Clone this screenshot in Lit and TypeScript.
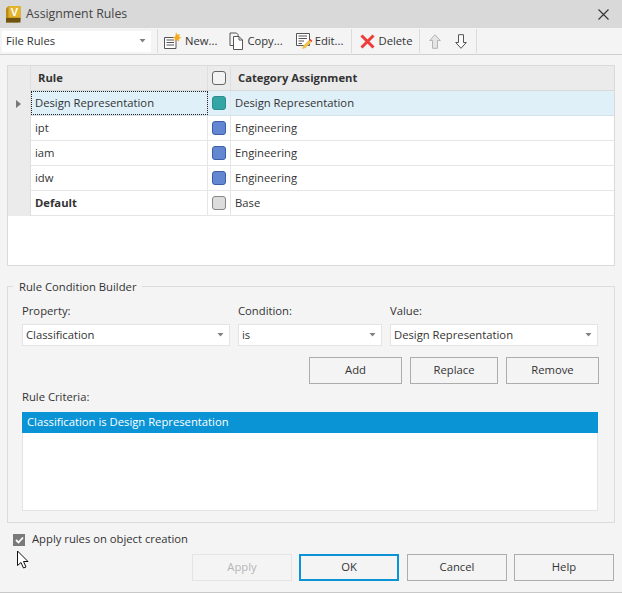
import { LitElement, html, css } from "lit";
import { customElement } from "lit/decorators.js";

const caret = html`<svg class="caret" width="7" height="4" viewBox="0 0 7 4"><path d="M.5 0H6.500L3.500 3.500Z" fill="#808080"/></svg>`;

const rows = [
  { n: "Design Representation", c: "Design Representation", col: "teal", sel: true },
  { n: "ipt", c: "Engineering", col: "blue" },
  { n: "iam", c: "Engineering", col: "blue" },
  { n: "idw", c: "Engineering", col: "blue" },
  { n: "Default", c: "Base", col: "grey", bold: true },
];

@customElement("app-root")
export class AppRoot extends LitElement {
  static styles = css`
    :host { display: block; width: 622px; height: 593px; font-family: "Open Sans", "Noto Sans", sans-serif; font-size: 11.25px; color: #333; }
    * { box-sizing: border-box; }
    .win { position: relative; width: 622px; height: 593px; background: #f4f4f4; border-bottom: 1px solid #c8c8c8; display: flex; flex-direction: column; overflow: hidden; }
    .title { height: 28px; background: #d9d9d9; display: flex; align-items: center; padding: 0 0 2px 6px; gap: 5px; font-size: 12.3px; color: #444; flex: none; }
    .title .t { flex: 1; }
    .title .x { margin-right: 13px; display: block; margin-top: 2px; }
    .title .logo { margin-top: 2px; }
    .tb { height: 27px; flex: none; border-bottom: 1px solid #d0d0d0; display: flex; align-items: center; background: #f4f4f4; }
    .combo { background: #fff; display: flex; align-items: center; justify-content: space-between; }
    .tb .combo { width: 149px; height: 21px; margin-left: 2px; padding: 0 5px 2px 4px; }
    .caret { display: block; flex: none; margin-top: 2px; }
    .sep { width: 1px; height: 24px; background: #dcdcdc; flex: none; }
    .tool { display: flex; align-items: center; flex: none; height: 24px; color: #333; white-space: nowrap; }
    .tool svg { display: block; flex: none; }
    .tool span { padding-bottom: 2px; }
    .ml5 { margin-left: 5px; } .ml6 { margin-left: 6px; } .ml7 { margin-left: 7px; } .ml8 { margin-left: 8px; }
    .ml9 { margin-left: 9px; } .ml11 { margin-left: 11px; } .ml12 { margin-left: 12px; } .ml13 { margin-left: 13px; } .ml14 { margin-left: 14px; }
    .g2 { gap: 2px; } .g3 { gap: 3px; }
    .table { margin: 10px 7px 0 7px; height: 201px; background: #fff; border: 1px solid #dadada; flex: none; display: flex; flex-direction: column; }
    .row { display: grid; grid-template-columns: 23px 177px 23px 1fr; height: 25px; border-bottom: 1px solid #e6e6e6; align-items: stretch; }
    .row.head { background: #ebebeb; border-bottom: 1px solid #d8d8d8; font-weight: 700; }
    .row.sel { background: #e0f0f9; border-bottom-color: #d6e2ea; }
    .cell { display: flex; align-items: center; padding: 0 0 2px 4px; border-right: 1px solid #e6e6e6; min-width: 0; white-space: nowrap; }
    .cell:last-child { border-right: none; }
    .row.head .cell { border-right-color: #dedede; }
    .row.head .name { padding-left: 7px; }
    .row.head .cat { padding-left: 7px; }
    .rh { background: #ebebeb; padding: 0 0 0 8px; border-right: 1px solid #dedede; margin-bottom: -1px; }
    .focus { outline: 1px dotted #222; outline-offset: -1px; }
    .cell.sw { padding: 0 0 0 4px; }
    .swatch { width: 14px; height: 14px; border-radius: 3px; border: 1px solid; }
    .teal { background: #34a5a5; border-color: #2a8c8c; }
    .blue { background: #6487d2; border-color: #3b5ea8; }
    .grey { background: #dcdcdc; border-color: #858585; }
    .hcheck { width: 14px; height: 14px; border-radius: 3px; border: 1px solid #666; background: #f3f3f3; }
    .b { font-weight: 700; }
    .group { position: relative; margin: 20px 7px 0 7px; height: 237px; border: 1px solid #dcdcdc; flex: none; padding: 16px 14px 0 14px; display: flex; flex-direction: column; }
    .legend { position: absolute; left: 5px; top: -8px; padding: 0 6px; background: #f4f4f4; line-height: 15px; }
    .fields { display: grid; grid-template-columns: 208px 144px 208px; column-gap: 8px; }
    .field { display: flex; flex-direction: column; gap: 6px; }
    .label { line-height: 15px; }
    .field .combo { height: 22px; padding: 0 5px 2px 3px; border: 1px solid #e4e4e4; }
    .btns { display: flex; justify-content: flex-end; gap: 8px; margin: 11px 1px 0 0; }
    .btn { height: 27px; width: 100px; padding-bottom: 2px; background: #f4f4f4; border: 1px solid #adadad; display: flex; align-items: center; justify-content: center; color: #333; flex: none; }
    .btn.w93 { width: 93px; } .btn.w88 { width: 88px; }
    .crit { margin-top: 5px; line-height: 15px; }
    .list { margin-top: 8px; height: 99px; background: #fff; border: 1px solid #e4e4e4; border-top: none; width: 576px; }
    .list .item { height: 21px; margin: 0 -1px; background: #0a94d6; color: #fff; display: flex; align-items: center; padding: 0 0 2px 5px; }
    .chk { display: flex; align-items: center; gap: 7px; margin: 9px 0 0 13px; height: 15px; flex: none; color: #333; }
    .chk span { padding-bottom: 2px; }
    .box { width: 12px; height: 12px; background: #7a7a7a; display: flex; align-items: center; justify-content: center; }
    .foot { display: flex; margin: 7px 0 0 192px; flex: none; }
    .dis { color: #b5b5b5; border-color: #e4e4e4; }
    .def { border: 2px solid #0a94d6; }
    .cursor { position: absolute; left: 16px; top: 550px; display: block; }
  `;

  render() {
    return html`<div class="win">
      <div class="title">
        <svg class="logo" width="15" height="17" viewBox="0 0 15 17">
          <path d="M0 2.500 2.500 0H14.500V14L12 16.500H0Z" fill="#b98a1c"/><path d="M2.500 0H14.500V11.500H2.500Z" fill="#e3b32c"/><path d="M0 12H14.500V16.500H0Z" fill="#6e5312"/>
          <text x="8.500" y="10" font-size="11" font-weight="700" fill="#fff" text-anchor="middle" font-family="Liberation Sans">V</text>
        </svg>
        <span class="t">Assignment Rules</span>
        <svg class="x" width="11" height="11" viewBox="0 0 11 11"><path d="M.5.500 10.500 10.500M10.500.500.500 10.500" stroke="#333" stroke-width="1.100" fill="none"/></svg>
      </div>
      <div class="tb">
        <div class="combo"><span>File Rules</span>${caret}</div>
        <div class="sep ml6"></div>
        <div class="tool ml5 g3">
          <svg width="19" height="18" viewBox="0 0 19 18"><path d="M1.500 5.500H13V16.500H1.500Z" fill="#fff" stroke="#555"/><path d="M3.500 8H11M3.500 10.500H11M3.500 13H11" stroke="#555"/><path d="M13 0l1.200 2.800L17 2l-1 2.600L18.500 6l-2.700.800.200 2.700-2.300-1.600-2.200 1.400.500-2.600L9.500 5.500l2.800-.700Z" fill="#f5a81c"/></svg>
          <span>New...</span>
        </div>
        <div class="tool ml12 g3">
          <svg width="15" height="18" viewBox="0 0 15 18"><path d="M4.500 13.500H1V1H7.500L9 2.500V4" fill="none" stroke="#555"/><path d="M4.500 4.500H10L13.500 8V17.500H4.500Z" fill="#fff" stroke="#555"/><path d="M10 4.500V8H13.500" fill="none" stroke="#555"/></svg>
          <span>Copy...</span>
        </div>
        <div class="tool ml13 g2">
          <svg width="17" height="18" viewBox="0 0 17 18"><path d="M.500 1.500H13.500V13.500H.500Z" fill="#fff" stroke="#555"/><path d="M2.500 4H11M2.500 6.500H11M2.500 9H8M2.500 11.500H6" stroke="#555"/><path d="M6 17l1-3 6-6 2.500 2-6 6Z" fill="#f0c24a"/><path d="M13 8l1.200-1.200 2.300 2.200L15.500 10Z" fill="#e8413c"/></svg>
          <span>Edit...</span>
        </div>
        <div class="sep ml8"></div>
        <div class="tool ml8 g3">
          <svg width="15" height="15" viewBox="0 0 15 15"><path d="M1.500 1.500 13.500 13.500M13.500 1.500 1.500 13.500" stroke="#ef3b3b" stroke-width="3"/></svg>
          <span>Delete</span>
        </div>
        <div class="sep ml7"></div>
        <div class="tool ml9">
          <svg width="12" height="15" viewBox="0 0 12 15"><path d="M6 .700 11.300 6.500H8.500V14.300H3.500V6.500H.700Z" fill="#e4e4e4" stroke="#b4b4b4"/></svg>
        </div>
        <div class="tool ml14">
          <svg width="12" height="15" viewBox="0 0 12 15"><path d="M6 14.300 11.300 8.500H8.500V.700H3.500V8.500H.700Z" fill="#fafafa" stroke="#555"/></svg>
        </div>
        <div class="sep ml9"></div>
      </div>
      <div class="table">
        <div class="row head">
          <div class="cell rh"></div>
          <div class="cell name">Rule</div>
          <div class="cell sw"><div class="hcheck"></div></div>
          <div class="cell cat">Category Assignment</div>
        </div>
        ${rows.map((r) => html`<div class="row ${r.sel ? "sel" : ""}">
          <div class="cell rh">${r.sel ? html`<svg width="5" height="8" viewBox="0 0 5 8"><path d="M0 0 5 4 0 8Z" fill="#777"/></svg>` : ""}</div>
          <div class="cell ${r.sel ? "focus" : ""} ${r.bold ? "b" : ""}">${r.n}</div>
          <div class="cell sw"><div class="swatch ${r.col}"></div></div>
          <div class="cell">${r.c}</div>
        </div>`)}
      </div>
      <div class="group">
        <div class="legend">Rule Condition Builder</div>
        <div class="fields">
          <div class="field"><span class="label">Property:</span><div class="combo"><span>Classification</span>${caret}</div></div>
          <div class="field"><span class="label">Condition:</span><div class="combo"><span>is</span>${caret}</div></div>
          <div class="field"><span class="label">Value:</span><div class="combo"><span>Design Representation</span>${caret}</div></div>
        </div>
        <div class="btns">
          <div class="btn w93">Add</div>
          <div class="btn w88">Replace</div>
          <div class="btn w93">Remove</div>
        </div>
        <div class="crit">Rule Criteria:</div>
        <div class="list"><div class="item">Classification is Design Representation</div></div>
      </div>
      <div class="chk">
        <div class="box"><svg width="9" height="8" viewBox="0 0 9 8"><path d="M1 4 3.500 6.500 8 1.500" stroke="#fff" stroke-width="1.800" fill="none"/></svg></div>
        <span>Apply rules on object creation</span>
      </div>
      <div class="foot">
        <div class="btn dis">Apply</div>
        <div class="btn def ml7">OK</div>
        <div class="btn ml8">Cancel</div>
        <div class="btn ml7">Help</div>
      </div>
      <svg class="cursor" width="13" height="20" viewBox="0 0 13 20"><path d="M1.500 1V15.500L5 12.500 7.500 18 10 17 7.500 11.500H12Z" fill="#fff" stroke="#111"/></svg>
    </div>`;
  }
}
